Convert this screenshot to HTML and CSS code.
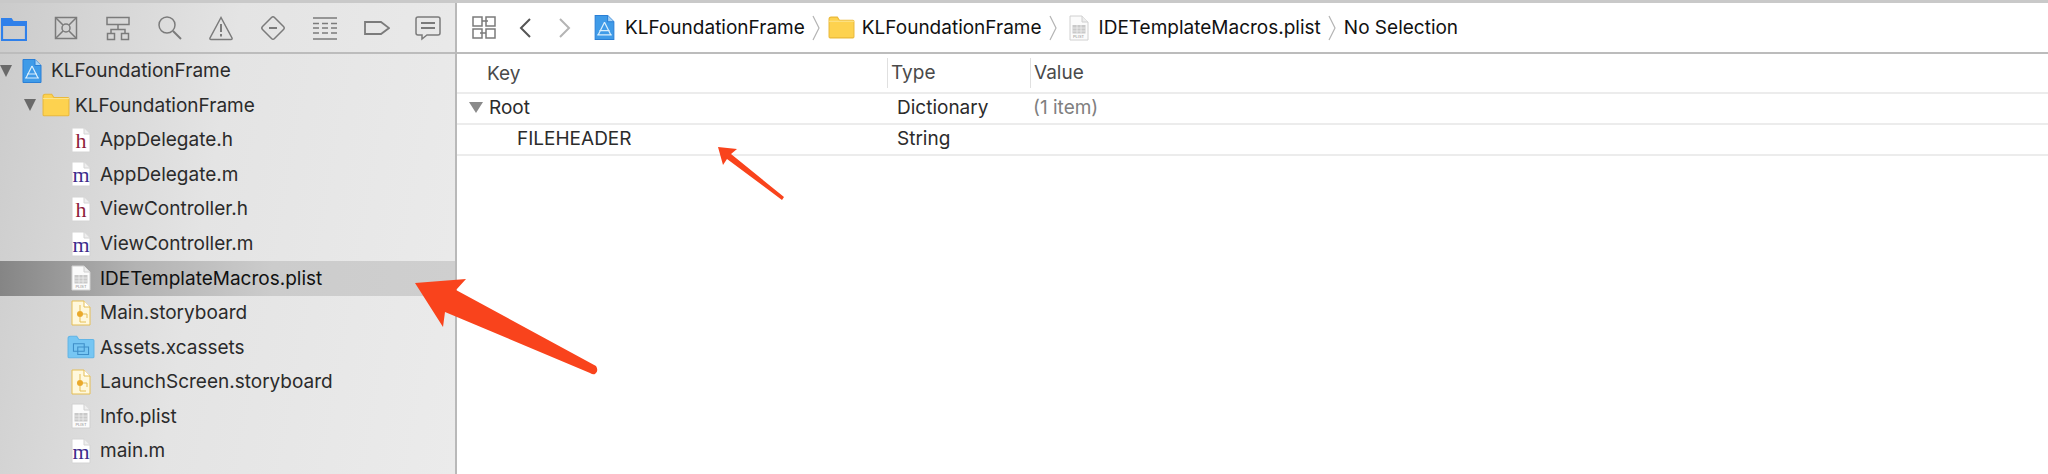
FILE: index.html
```html
<!DOCTYPE html>
<html lang="en">
<head>
    <meta charset="UTF-8">
    <title>KLFoundationFrame</title>
    <link rel="stylesheet" href="styles.css">
</head>
<body>
    <svg class="defs" xmlns="http://www.w3.org/2000/svg">
        <symbol id="project" viewBox="0 0 20 26">
            <path d="M1 1.500h12l6 6v17H1z" fill="#3f9be8" stroke="#2a7fd6"/>
            <path d="M13 1.500v6h6" fill="#a9d4f5" stroke="#2a7fd6"/>
            <path d="M10 8l-6 12M10 8l6 12M5 16h10M3 20h14" fill="none" stroke="#d9eefc" stroke-width="1.200"/>
        </symbol>
        <symbol id="folder" viewBox="0 0 26 22">
            <path d="M1 3q0-2 2-2h6l2 3h13q1 0 1 1v15q0 1-1 1H2q-1 0-1-1z" fill="#fdd24f" stroke="#eab93a"/>
            <path d="M1 5h24" stroke="#fbe48e"/>
        </symbol>
        <symbol id="assets" viewBox="0 0 26 22">
            <path d="M1 3q0-2 2-2h6l2 3h13q1 0 1 1v15q0 1-1 1H2q-1 0-1-1z" fill="#76c6f3" stroke="#62b5e6"/>
            <path d="M6 8h10v7H6zM10 11h10v7H10z" fill="none" stroke="#3f8fc8"/>
        </symbol>
        <symbol id="page" viewBox="0 0 20 26">
            <path d="M1 1h12l6 6v18H1z" fill="#fff" stroke="#d4d4d4"/>
            <path d="M13 1v6h6" fill="#eee" stroke="#d4d4d4"/>
        </symbol>
        <symbol id="plist" viewBox="0 0 20 26">
            <path d="M1 1h12l6 6v18H1z" fill="#fbfbfb" stroke="#d0d0d0"/>
            <path d="M13 1v6h6" fill="#eee" stroke="#d0d0d0"/>
            <path d="M3.500 10h13v8.500h-13z" fill="#c9c9c9"/>
            <path d="M3.500 13h13M3.500 16h13M8 10v8.500M12 10v8.500" stroke="#f2f2f2" stroke-width=".7"/>
        </symbol>
        <symbol id="storyboard" viewBox="0 0 20 26">
            <path d="M1 1h12l6 6v18H1z" fill="#fff8dc" stroke="#e5be55"/>
            <path d="M13 1v6h6" fill="#fff" stroke="#e5be55"/>
            <circle cx="9" cy="14" r="3" fill="#eaa92c"/>
            <path d="M9 5v6M9 17v5h6M12 14h4v4" fill="none" stroke="#e5be55"/>
        </symbol>
    </svg>

    <div class="topline"></div>
    <div class="window">
        <aside class="sidebar">
            <div class="nav-icons">
                <svg class="nav-icon" viewBox="0 0 26 26" style="color:#2f80ea">
                    <path d="M1 4h9l2 3h13v18H1z" fill="none" stroke="currentColor" stroke-width="2.200"/>
                    <path d="M1 4h9l2 3h13v4H1z" fill="currentColor"/>
                </svg>
                <svg class="nav-icon" viewBox="0 0 26 26">
                    <path d="M2.500 2.500h21v21h-21z"/>
                    <circle cx="13" cy="13" r="4"/>
                    <path d="M3 3l7 7M23 3l-7 7M3 23l7-7M23 23l-7-7"/>
                </svg>
                <svg class="nav-icon" viewBox="0 0 26 26">
                    <path d="M2 2.500h22v7H2zM13 9.500v5M6 19v-4.500h14V19M2.500 18.500h7v6h-7zM16.500 18.500h7v6h-7z"/>
                </svg>
                <svg class="nav-icon" viewBox="0 0 26 26">
                    <circle cx="11" cy="10" r="8"/>
                    <path d="M17 16l8 8" stroke-width="2"/>
                </svg>
                <svg class="nav-icon" viewBox="0 0 26 26">
                    <path d="M13 2.500L2 23q-.5 1.500 1 1.500h20q1.500 0 1-1.500z"/>
                    <path d="M13 9v8M13 19v2.500" stroke-width="2"/>
                </svg>
                <svg class="nav-icon" viewBox="0 0 26 26">
                    <path d="M11.500 2.500q1.500-1.500 3 0l9 9q1.500 1.500 0 3l-9 9q-1.500 1.500-3 0l-9-9q-1.500-1.500 0-3z"/>
                    <path d="M9 13h8" stroke-width="2"/>
                </svg>
                <svg class="nav-icon" viewBox="0 0 26 26">
                    <path d="M1 3h24M1 24h24M1 8.500h6M10 8.500h6M19 8.500h6M1 13h6M10 13h6M19 13h6M1 18h6M10 18h6M19 18h6"/>
                </svg>
                <svg class="nav-icon" viewBox="0 0 26 26">
                    <path d="M1 7h16l8 6-8 6H1z" stroke-width="1.800"/>
                </svg>
                <svg class="nav-icon" viewBox="0 0 26 26">
                    <path d="M3 2h20q2 0 2 2v14q0 2-2 2H12l-5 4v-4H3q-2 0-2-2V4q0-2 2-2z"/>
                    <path d="M6 8h14M6 13h14" stroke-width="1.800"/>
                </svg>
            </div>
            <div class="tree">
                <div class="row level-0">
                    <span class="disclosure"></span>
                    <svg class="file-icon"><use href="#project"/></svg>
                    <span class="name">KLFoundationFrame</span>
                </div>
                <div class="row level-1">
                    <span class="disclosure"></span>
                    <svg class="file-icon"><use href="#folder"/></svg>
                    <span class="name">KLFoundationFrame</span>
                </div>
                <div class="row level-2">
                    <div class="doc"><svg class="file-icon"><use href="#page"/></svg><span class="doc-letter header">h</span></div>
                    <span class="name">AppDelegate.h</span>
                </div>
                <div class="row level-2">
                    <div class="doc"><svg class="file-icon"><use href="#page"/></svg><span class="doc-letter impl">m</span></div>
                    <span class="name">AppDelegate.m</span>
                </div>
                <div class="row level-2">
                    <div class="doc"><svg class="file-icon"><use href="#page"/></svg><span class="doc-letter header">h</span></div>
                    <span class="name">ViewController.h</span>
                </div>
                <div class="row level-2">
                    <div class="doc"><svg class="file-icon"><use href="#page"/></svg><span class="doc-letter impl">m</span></div>
                    <span class="name">ViewController.m</span>
                </div>
                <div class="row level-2 selected">
                    <div class="doc"><svg class="file-icon"><use href="#plist"/></svg><span class="plist-tag">PLIST</span></div>
                    <span class="name">IDETemplateMacros.plist</span>
                </div>
                <div class="row level-2">
                    <svg class="file-icon"><use href="#storyboard"/></svg>
                    <span class="name">Main.storyboard</span>
                </div>
                <div class="row level-2">
                    <svg class="file-icon"><use href="#assets"/></svg>
                    <span class="name">Assets.xcassets</span>
                </div>
                <div class="row level-2">
                    <svg class="file-icon"><use href="#storyboard"/></svg>
                    <span class="name">LaunchScreen.storyboard</span>
                </div>
                <div class="row level-2">
                    <div class="doc"><svg class="file-icon"><use href="#plist"/></svg><span class="plist-tag">PLIST</span></div>
                    <span class="name">Info.plist</span>
                </div>
                <div class="row level-2">
                    <div class="doc"><svg class="file-icon"><use href="#page"/></svg><span class="doc-letter impl">m</span></div>
                    <span class="name">main.m</span>
                </div>
            </div>
        </aside>

        <main class="editor">
            <div class="jumpbar">
                <svg class="related" viewBox="0 0 24 23">
                    <path d="M1 1h9v9H1zM14 1h9v9h-9zM1 13h9v9H1zM14 13h9v9h-9zM10 5h6M8 17h6"/>
                </svg>
                <svg class="nav-arrow back" viewBox="0 0 14 22"><path d="M12 2L3 11l9 9"/></svg>
                <svg class="nav-arrow forward" viewBox="0 0 14 22"><path d="M2 2l9 9-9 9"/></svg>
                <div class="crumbs">
                    <svg class="crumb-icon project"><use href="#project"/></svg>
                    <span class="crumb">KLFoundationFrame</span>
                    <svg class="sep" viewBox="0 0 9 26"><path d="M1 1l6 12-6 12"/></svg>
                    <svg class="crumb-icon crumb-folder"><use href="#folder"/></svg>
                    <span class="crumb">KLFoundationFrame</span>
                    <svg class="sep" viewBox="0 0 9 26"><path d="M1 1l6 12-6 12"/></svg>
                    <div class="doc crumb-doc"><svg class="file-icon"><use href="#plist"/></svg><span class="plist-tag">PLIST</span></div>
                    <span class="crumb">IDETemplateMacros.plist</span>
                    <svg class="sep" viewBox="0 0 9 26"><path d="M1 1l6 12-6 12"/></svg>
                    <span class="crumb">No Selection</span>
                </div>
            </div>
            <div class="plist-table">
                <div class="plist-head">
                    <div class="col-key">Key</div>
                    <div class="col-type">Type</div>
                    <div class="col-value">Value</div>
                </div>
                <div class="plist-row">
                    <div class="cell-key"><span class="disclosure small"></span>Root</div>
                    <div class="cell-type">Dictionary</div>
                    <div class="cell-value">(1 item)</div>
                </div>
                <div class="plist-row">
                    <div class="cell-key child">FILEHEADER</div>
                    <div class="cell-type">String</div>
                    <div class="cell-value"></div>
                </div>
            </div>
        </main>
    </div>

    <svg class="callout big" viewBox="0 0 190 100">
        <path d="M5 8L56 4 46 15 186 91Q189 96 185 99 183 100 180 98L35 37 33 52z"/>
    </svg>
    <svg class="callout small" viewBox="0 0 70 56">
        <path d="M1 1L20 3 14 8 67 51 65 54 10 13 6 19z"/>
    </svg>
</body>
</html>
```

FILE: styles.css
```css
html, body {
    margin: 0;
    padding: 0;
    height: 474px;
    overflow: hidden;
    background-color: #fff;
}
body {
    position: relative;
    font-family: Inter, "Liberation Sans", Arial, sans-serif;
    font-size: 19px;
    color: #2b2b2b;
}
.defs {
    position: absolute;
    width: 0;
    height: 0;
}
.topline {
    height: 3px;
    background-color: #c9c9c9;
}
.window {
    display: flex;
    height: 471px;
}

/* left navigator */
.sidebar {
    width: 455px;
    flex-shrink: 0;
    border-right: 2px solid #b9b9b9;
    background: linear-gradient(100deg, #cbcbcb 0%, #e4e4e4 45%, #ebebeb 100%);
}
.nav-icons {
    display: flex;
    align-items: center;
    gap: 25.800px;
    height: 49px;
    padding-left: 1px;
    border-bottom: 2px solid #bcbcbc;
}
.nav-icon {
    width: 26px;
    height: 26px;
    flex-shrink: 0;
    fill: none;
    stroke: #7b7b7b;
    stroke-width: 1.500;
    color: #7b7b7b;
}
.nav-icon:first-child {
    stroke: none;
}
.row {
    display: flex;
    align-items: center;
    box-sizing: border-box;
    height: 34.550px;
    padding-bottom: 1px;
    white-space: nowrap;
}
.level-0 { padding-left: 0; }
.level-1 { padding-left: 24px; }
.level-2 { padding-left: 67px; }
.selected {
    background: linear-gradient(90deg, #858585 0%, #b3b3b3 30%, #cccccc 60%, #cfcfcf 100%);
    color: #111;
}
.disclosure {
    width: 0;
    height: 0;
    margin-right: 6px;
    border-left: 6.500px solid transparent;
    border-right: 6.500px solid transparent;
    border-top: 12px solid #6a6a6a;
}
.disclosure.small {
    margin: 0 6px 0 0;
    border-left-width: 7px;
    border-right-width: 7px;
    border-top: 11px solid #8a8a8a;
}
.file-icon {
    display: block;
    width: 28px;
    height: 26px;
    flex-shrink: 0;
}
.name {
    margin-left: 5px;
}
.doc {
    position: relative;
    width: 28px;
    height: 26px;
    flex-shrink: 0;
}
.doc-letter {
    position: absolute;
    left: 2px;
    right: 2px;
    bottom: 1px;
    font-family: "Liberation Serif", serif;
    font-size: 22px;
    line-height: 22px;
    text-align: center;
}
.header { color: #8f1d3c; }
.impl { color: #3d2d8c; }
.plist-tag {
    position: absolute;
    left: 0;
    right: 0;
    bottom: 2px;
    font-size: 4px;
    line-height: 5px;
    text-align: center;
    color: #8d8d8d;
}

/* right side */
.editor {
    flex: 1;
    min-width: 0;
}
.jumpbar {
    display: flex;
    align-items: center;
    height: 49px;
    border-bottom: 2px solid #bcbcbc;
    color: #111;
}
.related {
    width: 24px;
    height: 23px;
    margin-left: 15px;
    fill: none;
    stroke: #7b7b7b;
    stroke-width: 1.500;
}
.nav-arrow {
    width: 14px;
    height: 22px;
    fill: none;
    stroke-width: 2;
}
.back {
    margin-left: 22px;
    stroke: #555;
}
.forward {
    margin-left: 26px;
    stroke: #b4b4b4;
}
.crumbs {
    display: flex;
    align-items: center;
    margin-left: 22px;
}
.crumb-icon {
    display: block;
    flex-shrink: 0;
}
.crumb-icon.project {
    width: 21px;
    height: 27px;
    margin-right: 10px;
}
.crumb-folder {
    width: 27px;
    height: 23px;
    margin-right: 7px;
}
.crumb-doc {
    margin-right: 6px;
}
.sep {
    width: 9px;
    height: 26px;
    margin: 0 7px;
    fill: none;
    stroke: #b4b4b4;
    stroke-width: 1.200;
}
.crumb {
    white-space: nowrap;
}
.plist-head, .plist-row {
    display: grid;
    grid-template-columns: 430px 143px 1fr;
    align-items: center;
}
.plist-head {
    height: 38px;
    border-bottom: 2px solid #ececec;
    color: #4a4a4a;
}
.col-key { padding-left: 30px; }
.col-type, .col-value {
    height: 30px;
    line-height: 30px;
    padding-left: 3px;
    border-left: 1px solid #e0e0e0;
}
.plist-row {
    height: 27px;
    padding-bottom: 2px;
    border-bottom: 2px solid #ececec;
}
.cell-key {
    display: flex;
    align-items: center;
    padding-left: 12px;
}
.cell-key.child { padding-left: 60px; }
.cell-type { padding-left: 10px; }
.cell-value {
    padding-left: 3px;
    color: #808080;
}

/* red arrows drawn over the screenshot */
.callout {
    position: absolute;
    fill: #f9431c;
}
.callout.big {
    left: 410px;
    top: 275px;
    width: 190px;
    height: 100px;
}
.callout.small {
    left: 717px;
    top: 146px;
    width: 70px;
    height: 56px;
}
```
